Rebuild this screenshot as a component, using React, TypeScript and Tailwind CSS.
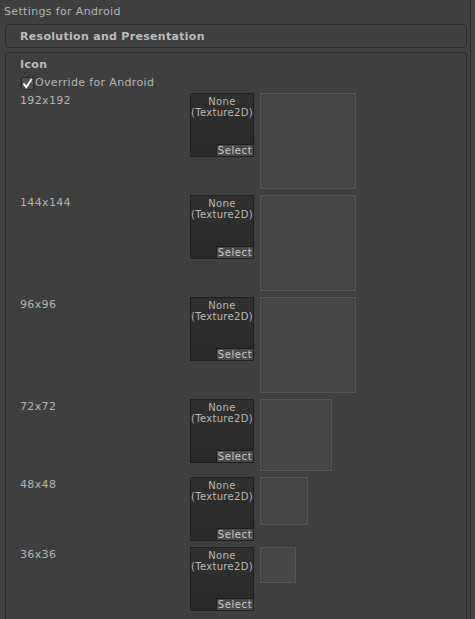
const ICONS = [
  { label: "192x192", preview: 96 },
  { label: "144x144", preview: 96 },
  { label: "96x96", preview: 96 },
  { label: "72x72", preview: 72 },
  { label: "48x48", preview: 48 },
  { label: "36x36", preview: 36 },
];

function TextureField() {
  return (
    <div className="relative h-[64px] w-[64px] shrink-0 border border-[#1f1f1f] bg-gradient-to-b from-[#303030] to-[#292929] text-center text-[10px] leading-[11px] tracking-[0.3px] text-[#b8b8b8]">
      <div className="pt-[2px]">None</div>
      <div>(Texture2D)</div>
      <div className="absolute bottom-0 right-0 h-[12px] w-[37px] border-l border-t border-[#1f1f1f] bg-[#4a4a4a] text-[10px] leading-[11px] tracking-[0.6px] text-[#c8c8c8]">
        Select
      </div>
    </div>
  );
}

export default function App() {
  return (
    <div
      className="flex h-[619px] w-[475px] overflow-hidden bg-[#3f3f3f] text-[11px] tracking-[0.35px] text-[#b4b4b4]"
      style={{ fontFamily: '"DejaVu Sans", "Liberation Sans", sans-serif' }}
    >
      <div className="flex w-[470px] flex-col">
        <div className="h-[24px] pl-[4px] pt-[4px] leading-[16px]">Settings for Android</div>

        <div className="ml-[5px] mr-[3px] h-[24px] rounded-[4px] border border-[#2a2a2a] pl-[14px] pt-[1px] text-[11px] font-bold leading-[22px] tracking-[0.3px] text-[#bcbcbc]">
          Resolution and Presentation
        </div>

        <div className="ml-[5px] mr-[3px] mt-[4px] flex-1 rounded-t-[4px] border border-b-0 border-[#2a2a2a] pl-[14px]">
          <div className="h-[20px] pt-[3px] font-bold leading-[18px] text-[#bcbcbc]">Icon</div>
          <div className="flex h-[20px] items-center gap-[1px] pl-[1px] pt-[1px]">
            <span className="flex h-[13px] w-[13px] items-center justify-center rounded-[2px] border border-[#2a2a2a] bg-[#505050]">
              <svg width="11" height="11" viewBox="0 0 11 11">
                <path d="M1.5 5.5 L4.3 9 L9.8 1" fill="none" stroke="#ffffff" strokeWidth="2" />
              </svg>
            </span>
            <span>Override for Android</span>
          </div>
          {ICONS.map((icon) => (
            <div key={icon.label} className="mb-[6px] flex items-start">
              <div className="w-[170px] shrink-0 pt-[1px] leading-[14px]">{icon.label}</div>
              <TextureField />
              <div
                className="ml-[6px] shrink-0 border border-[#555555] bg-[#474747]"
                style={{ width: icon.preview, height: icon.preview }}
              />
            </div>
          ))}
        </div>
      </div>
      <div className="w-[1px] bg-[#2b2b2b]" />
      <div className="flex-1 bg-[#444444]" />
    </div>
  );
}
